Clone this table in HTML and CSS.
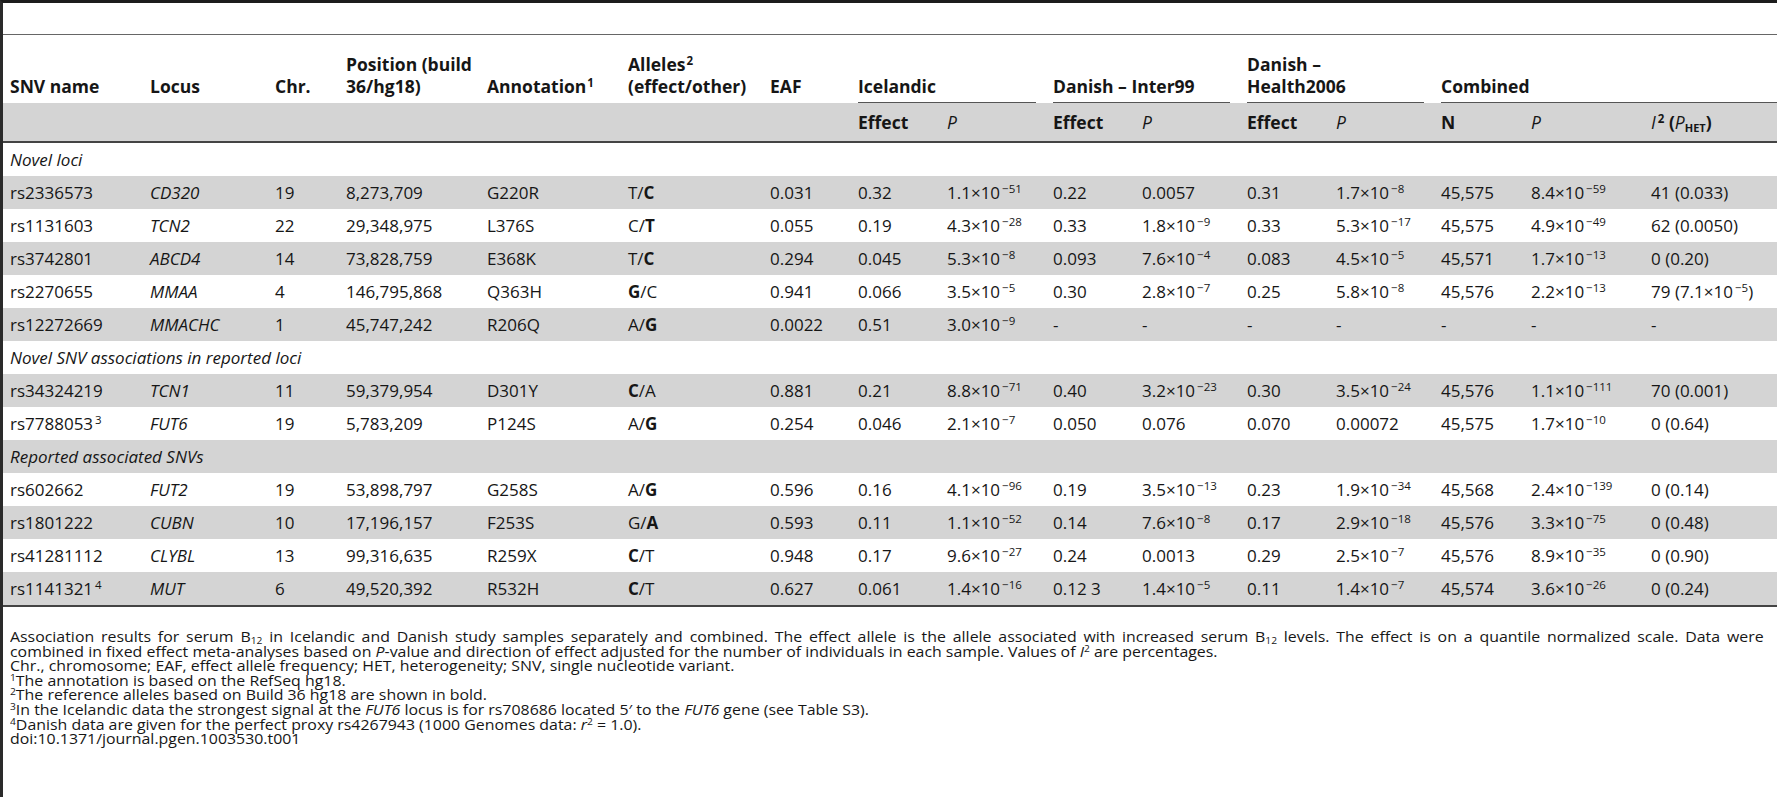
FILE: index.html
```html
<!DOCTYPE html>
<html>
<head>
    <link rel="stylesheet" href="styles.css">
</head>
<body>
    <div class="frame">
        <table class="results">
            <colgroup>
                <col style="width: 147px">
                <col style="width: 125px">
                <col style="width: 71px">
                <col style="width: 141px">
                <col style="width: 141px">
                <col style="width: 142px">
                <col style="width: 88px">
                <col style="width: 89px">
                <col style="width: 106px">
                <col style="width: 89px">
                <col style="width: 105px">
                <col style="width: 89px">
                <col style="width: 105px">
                <col style="width: 90px">
                <col style="width: 120px">
                <col>
            </colgroup>
            <thead>
                <tr class="head-top">
                    <th>SNV name</th>
                    <th>Locus</th>
                    <th>Chr.</th>
                    <th>Position (build<br>36/hg18)</th>
                    <th>Annotation<sup>1</sup></th>
                    <th>Alleles<sup>2</sup><br>(effect/other)</th>
                    <th>EAF</th>
                    <th colspan="2" class="group"><div>Icelandic</div></th>
                    <th colspan="2" class="group"><div>Danish – Inter99</div></th>
                    <th colspan="2" class="group"><div>Danish –<br>Health2006</div></th>
                    <th colspan="3" class="group last"><div>Combined</div></th>
                </tr>
                <tr class="head-sub">
                    <th></th><th></th><th></th><th></th><th></th><th></th><th></th>
                    <th>Effect</th>
                    <th><i>P</i></th>
                    <th>Effect</th>
                    <th><i>P</i></th>
                    <th>Effect</th>
                    <th><i>P</i></th>
                    <th>N</th>
                    <th><i>P</i></th>
                    <th><i>I</i><sup>2</sup> (<i>P</i><sub>HET</sub>)</th>
                </tr>
            </thead>
            <tbody>
                <tr class="section"><td colspan="16">Novel loci</td></tr>
                <tr>
                    <td>rs2336573</td><td><i>CD320</i></td><td>19</td><td>8,273,709</td><td>G220R</td><td>T/<b>C</b></td><td>0.031</td>
                    <td>0.32</td><td>1.1×10<sup>−51</sup></td>
                    <td>0.22</td><td>0.0057</td>
                    <td>0.31</td><td>1.7×10<sup>−8</sup></td>
                    <td>45,575</td><td>8.4×10<sup>−59</sup></td><td>41 (0.033)</td>
                </tr>
                <tr>
                    <td>rs1131603</td><td><i>TCN2</i></td><td>22</td><td>29,348,975</td><td>L376S</td><td>C/<b>T</b></td><td>0.055</td>
                    <td>0.19</td><td>4.3×10<sup>−28</sup></td>
                    <td>0.33</td><td>1.8×10<sup>−9</sup></td>
                    <td>0.33</td><td>5.3×10<sup>−17</sup></td>
                    <td>45,575</td><td>4.9×10<sup>−49</sup></td><td>62 (0.0050)</td>
                </tr>
                <tr>
                    <td>rs3742801</td><td><i>ABCD4</i></td><td>14</td><td>73,828,759</td><td>E368K</td><td>T/<b>C</b></td><td>0.294</td>
                    <td>0.045</td><td>5.3×10<sup>−8</sup></td>
                    <td>0.093</td><td>7.6×10<sup>−4</sup></td>
                    <td>0.083</td><td>4.5×10<sup>−5</sup></td>
                    <td>45,571</td><td>1.7×10<sup>−13</sup></td><td>0 (0.20)</td>
                </tr>
                <tr>
                    <td>rs2270655</td><td><i>MMAA</i></td><td>4</td><td>146,795,868</td><td>Q363H</td><td><b>G</b>/C</td><td>0.941</td>
                    <td>0.066</td><td>3.5×10<sup>−5</sup></td>
                    <td>0.30</td><td>2.8×10<sup>−7</sup></td>
                    <td>0.25</td><td>5.8×10<sup>−8</sup></td>
                    <td>45,576</td><td>2.2×10<sup>−13</sup></td><td>79 (7.1×10<sup>−5</sup>)</td>
                </tr>
                <tr>
                    <td>rs12272669</td><td><i>MMACHC</i></td><td>1</td><td>45,747,242</td><td>R206Q</td><td>A/<b>G</b></td><td>0.0022</td>
                    <td>0.51</td><td>3.0×10<sup>−9</sup></td>
                    <td>-</td><td>-</td>
                    <td>-</td><td>-</td>
                    <td>-</td><td>-</td><td>-</td>
                </tr>
                <tr class="section"><td colspan="16">Novel SNV associations in reported loci</td></tr>
                <tr>
                    <td>rs34324219</td><td><i>TCN1</i></td><td>11</td><td>59,379,954</td><td>D301Y</td><td><b>C</b>/A</td><td>0.881</td>
                    <td>0.21</td><td>8.8×10<sup>−71</sup></td>
                    <td>0.40</td><td>3.2×10<sup>−23</sup></td>
                    <td>0.30</td><td>3.5×10<sup>−24</sup></td>
                    <td>45,576</td><td>1.1×10<sup>−111</sup></td><td>70 (0.001)</td>
                </tr>
                <tr>
                    <td>rs7788053<sup>3</sup></td><td><i>FUT6</i></td><td>19</td><td>5,783,209</td><td>P124S</td><td>A/<b>G</b></td><td>0.254</td>
                    <td>0.046</td><td>2.1×10<sup>−7</sup></td>
                    <td>0.050</td><td>0.076</td>
                    <td>0.070</td><td>0.00072</td>
                    <td>45,575</td><td>1.7×10<sup>−10</sup></td><td>0 (0.64)</td>
                </tr>
                <tr class="section"><td colspan="16">Reported associated SNVs</td></tr>
                <tr>
                    <td>rs602662</td><td><i>FUT2</i></td><td>19</td><td>53,898,797</td><td>G258S</td><td>A/<b>G</b></td><td>0.596</td>
                    <td>0.16</td><td>4.1×10<sup>−96</sup></td>
                    <td>0.19</td><td>3.5×10<sup>−13</sup></td>
                    <td>0.23</td><td>1.9×10<sup>−34</sup></td>
                    <td>45,568</td><td>2.4×10<sup>−139</sup></td><td>0 (0.14)</td>
                </tr>
                <tr>
                    <td>rs1801222</td><td><i>CUBN</i></td><td>10</td><td>17,196,157</td><td>F253S</td><td>G/<b>A</b></td><td>0.593</td>
                    <td>0.11</td><td>1.1×10<sup>−52</sup></td>
                    <td>0.14</td><td>7.6×10<sup>−8</sup></td>
                    <td>0.17</td><td>2.9×10<sup>−18</sup></td>
                    <td>45,576</td><td>3.3×10<sup>−75</sup></td><td>0 (0.48)</td>
                </tr>
                <tr>
                    <td>rs41281112</td><td><i>CLYBL</i></td><td>13</td><td>99,316,635</td><td>R259X</td><td><b>C</b>/T</td><td>0.948</td>
                    <td>0.17</td><td>9.6×10<sup>−27</sup></td>
                    <td>0.24</td><td>0.0013</td>
                    <td>0.29</td><td>2.5×10<sup>−7</sup></td>
                    <td>45,576</td><td>8.9×10<sup>−35</sup></td><td>0 (0.90)</td>
                </tr>
                <tr>
                    <td>rs1141321<sup>4</sup></td><td><i>MUT</i></td><td>6</td><td>49,520,392</td><td>R532H</td><td><b>C</b>/T</td><td>0.627</td>
                    <td>0.061</td><td>1.4×10<sup>−16</sup></td>
                    <td>0.12 3</td><td>1.4×10<sup>−5</sup></td>
                    <td>0.11</td><td>1.4×10<sup>−7</sup></td>
                    <td>45,574</td><td>3.6×10<sup>−26</sup></td><td>0 (0.24)</td>
                </tr>
            </tbody>
        </table>

        <!-- Примечания к таблице -->
        <div class="notes">
            <div class="notes-body">
                <p>
                    <span class="full-line">Association results for serum B<sub>12</sub> in Icelandic and Danish study samples separately and combined. The effect allele is the allele associated with increased serum B<sub>12</sub> levels. The effect is on a quantile normalized scale. Data were</span>
                    combined in fixed effect meta-analyses based on <i>P</i>-value and direction of effect adjusted for the number of individuals in each sample. Values of <i>I</i><sup>2</sup> are percentages.
                </p>
                <p>Chr., chromosome; EAF, effect allele frequency; HET, heterogeneity; SNV, single nucleotide variant.</p>
                <p><sup>1</sup>The annotation is based on the RefSeq hg18.</p>
                <p><sup>2</sup>The reference alleles based on Build 36 hg18 are shown in bold.</p>
                <p><sup>3</sup>In the Icelandic data the strongest signal at the <i>FUT6</i> locus is for rs708686 located 5′ to the <i>FUT6</i> gene (see Table S3).</p>
                <p><sup>4</sup>Danish data are given for the perfect proxy rs4267943 (1000 Genomes data: <i>r</i><sup>2</sup> = 1.0).</p>
                <p>doi:10.1371/journal.pgen.1003530.t001</p>
            </div>
        </div>
    </div>
</body>
</html>
```

FILE: styles.css
```css
body {
  margin: 0;
  font-family: "Open Sans", "DejaVu Sans", sans-serif;
  color: #161616;
  background-color: #fff;
}

.frame {
  border-top: 3px solid #1c1c1c;
  border-left: 3px solid #2a2a2a;
  min-height: 797px;
  box-sizing: border-box;
}

.results {
  width: 100%;
  margin-top: 31px;
  border-collapse: collapse;
  table-layout: fixed;
  border-top: 1px solid #666;
  border-bottom: 2px solid #444;
  font-size: 17px;
}

.results th,
.results td {
  padding: 0 8px 0 0;
  text-align: left;
  white-space: nowrap;
}

.results th:first-child,
.results td:first-child {
  padding-left: 7px;
}

/* шапка таблицы */
.head-top th {
  height: 62px;
  vertical-align: bottom;
  padding-bottom: 6px;
  line-height: 22px;
  font-size: 17.5px;
  font-weight: bold;
}

.head-top th.group {
  padding-right: 17px;
  padding-bottom: 0;
}

.head-top th.group.last {
  padding-right: 0;
}

.group div {
  border-bottom: 1px solid #555;
  padding-bottom: 5px;
}

.head-sub th {
  height: 38px;
  background-color: #d4d4d4;
  border-bottom: 2px solid #444;
  font-size: 17.5px;
  font-weight: bold;
}

.head-sub i {
  font-weight: normal;
}

.head-sub sub {
  font-size: 11px;
  vertical-align: -3px;
  line-height: 0;
}

.results td {
  height: 33px;
}

.results tbody tr:nth-child(even) {
  background-color: #d4d4d4;
}

.section td {
  font-style: italic;
}

.results sup {
  font-size: 11.5px;
  vertical-align: 6px;
  line-height: 0;
  margin-left: 2px;
}

.head-top sup {
  margin-left: 1px;
}

/* примечания: в оригинале текст шире, чем выше */
.notes {
  padding: 23px 0 0 7px;
}

.notes-body {
  width: 1545px;
  font-size: 14px;
  line-height: 14.6px;
  transform: scaleX(1.135);
  transform-origin: left top;
}

.notes p {
  margin: 0;
  white-space: nowrap;
}

/* первая строка растянута на всю ширину */
.full-line {
  display: block;
  text-align: justify;
  text-align-last: justify;
}

.notes sup {
  font-size: 9px;
  vertical-align: 5px;
  line-height: 0;
}

.notes sub {
  font-size: 9px;
  vertical-align: -2px;
  line-height: 0;
}
```
